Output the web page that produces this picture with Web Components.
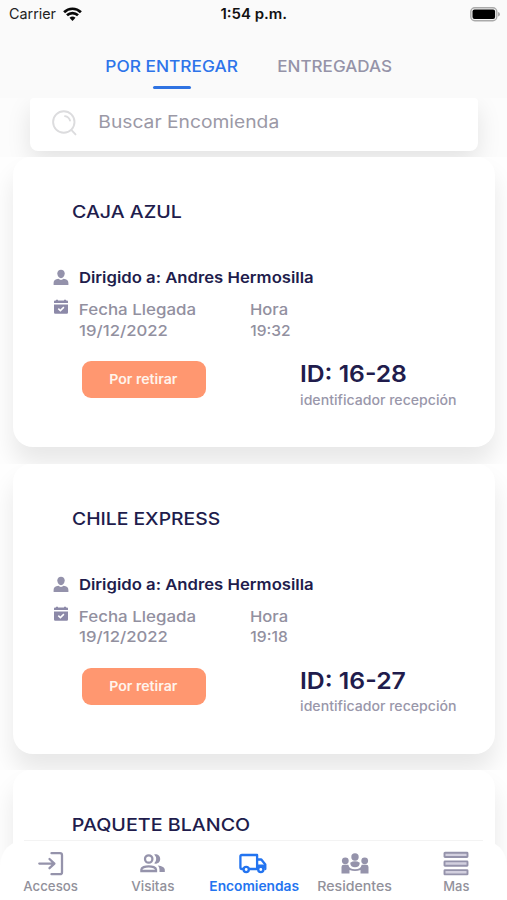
<!DOCTYPE html>
<html lang="es">
<head>
<meta charset="utf-8">
<title>Encomiendas</title>
<style>
html,body{margin:0;height:900px;overflow:hidden;background:#fefefe}
body{font-family:Inter,"Liberation Sans",sans-serif}
</style>
</head>
<body>
<parcel-app></parcel-app>
<script>
const ink = document.createElement('canvas').getContext('2d');
const define = (name, html, setup) => customElements.define(name, class extends HTMLElement {
  connectedCallback() {
    if (this.shadowRoot) return;
    this.attachShadow({mode: 'open'}).innerHTML = html;
    if (setup) setup.call(this, this.shadowRoot);
  }
});

/* One line of text: w = visible width, s = font size, h = line height, k = weight, x = optical shift */
customElements.define('text-line', class extends HTMLElement {
  connectedCallback() {
    if (this.shadowRoot) return;
    const a = n => +this.getAttribute(n);
    const root = this.attachShadow({mode: 'open'});
    const text = this.getAttribute('t');
    ink.font = `${a('k')} ${a('s')}px Inter`;
    const m = ink.measureText(text);
    const scale = a('w') / (m.actualBoundingBoxLeft + m.actualBoundingBoxRight);
    root.innerHTML = `<style>
      :host{display:block;width:${a('w')}px;height:${a('h')}px}
      span{display:inline-block;vertical-align:top;white-space:pre;font:${a('k')} ${a('s')}px/${a('h')}px Inter,"Liberation Sans",sans-serif;
        transform-origin:0 50%;transform:translateX(${m.actualBoundingBoxLeft * scale + a('x')}px) scaleX(${scale})}
    </style><span></span>`;
    root.querySelector('span').textContent = text;
  }
});

define('status-bar', `<style>
  :host{display:grid;grid-template-columns:1fr auto 1fr;align-items:center;height:28px;padding:0 7px 0 9px;color:#222}
  .l{display:flex;align-items:center;gap:6px}
  .r{justify-self:end;display:flex}
  .time{color:#111}
  svg{display:block}
</style>
<div class="l"><text-line t="Carrier" w="47.5" s="14.6" h="28" k="400"></text-line>
<svg width="19" height="15" viewBox="0 0 19 15" fill="none" stroke="#080808"><path d="M1.1 5.2a12 12 0 0 1 16.8 0M4 8.3a8 8 0 0 1 11 0" stroke-width="2.7"/><path d="M6.5 10.8a4.5 4.5 0 0 1 6 0L9.5 14z" fill="#080808" stroke="none"/></svg></div>
<text-line class="time" t="1:54 p.m." w="66" s="14.6" h="28" k="600" x="-1.6"></text-line>
<div class="r"><svg width="30" height="15" viewBox="0 0 30 15"><rect x=".8" y=".7" width="26" height="13" rx="4" fill="#f5f5f5" stroke="#aaa" stroke-width="1.4"/><rect x="2.5" y="2.4" width="22.6" height="9.6" rx="2" fill="#000"/><path d="M28 5q2 .5 2 2.2T28 9.5z" fill="#aaa"/></svg></div>`);

define('tab-header', `<style>
  :host{display:flex;gap:40.5px;height:70px;padding-left:106px;box-sizing:border-box}
  .on{color:#2d74ea}.off{color:#9593a8}
  .tab{display:flex;flex-direction:column;align-items:center;padding-top:24px;gap:5px}
  i{width:38px;height:2.6px;border-radius:2px;background:#2f73e2}
</style>
<div class="tab on"><text-line t="POR ENTREGAR" w="131.5" s="15.5" h="29" k="500" x=".4"></text-line><i></i></div>
<div class="tab off"><text-line t="ENTREGADAS" w="113.5" s="15.5" h="29" k="500" x=".4"></text-line></div>`);

define('search-box', `<style>
  :host{display:block;height:59px;overflow:hidden;background:#fcfcfc}
  .box{display:flex;align-items:center;gap:22px;box-sizing:border-box;height:53px;margin:0 29px 0 30px;padding:0 0 7px 22px;
    border-radius:4px 4px 8px 8px;background:#fff;color:#9b99a6;box-shadow:0 10px 24px rgba(0,0,0,.1)}
  svg{display:block;margin-top:3px}
  text-line{margin-top:1px}
</style>
<div class="box"><svg width="25" height="26" viewBox="0 0 25 26" fill="none" stroke="#dcdcde" stroke-width="1.9" stroke-linecap="round"><circle cx="11.8" cy="12" r="10.7"/><path d="M19.5 20.2l4 4.2M13 6.1a6 6 0 0 1 5 4.5"/></svg>
<text-line t="Buscar Encomienda" w="179" s="17.3" h="46" k="400" x=".4"></text-line></div>`);

define('parcel-card', `<style>
  :host{display:block;height:306.5px;overflow:hidden;background:#fefefe;flex:none}
  .card{box-sizing:border-box;height:290px;margin:0 12.5px 0 13px;padding:40px 0 0 39px;border-radius:18px 18px 20px 20px;background:#fff;
    box-shadow:0 17px 24px rgba(0,0,0,.09);color:#96939f}
  .title,.to,.id{color:#211c4c}
  .title{margin-left:20px}
  .row{display:flex;align-items:center;gap:11.5px;height:24px;margin-top:40px}
  .row svg,.info svg{display:block;width:16px;flex:none}
  .row svg{margin:-1px -1px 0 1px}
  .info{display:grid;grid-template-columns:16px 159.5px auto;column-gap:11.5px;margin-top:10px;color:#92909f}
  .info svg{margin-top:-1px;margin-left:.5px}
  .foot{display:flex;align-items:flex-start;margin:20px 0 0 30px}
  .btn{display:flex;align-items:center;justify-content:center;width:124px;height:37px;border-radius:9px;background:#ff9770;color:#fff4ec;margin-right:94.5px}
  .sub{color:#9997aa;margin-top:.5px}
</style>
<div class="card">
  <div class="title"></div>
  <div class="row"><svg height="17" viewBox="0 0 16 17" fill="#9492ab"><path d="M8 .7c2.2 0 3.7 1.6 3.7 3.9C11.700 7.300 10 9.300 8 9.300S4.300 7.300 4.300 4.600C4.300 2.300 5.800.7 8 .7z"/><path d="M.6 16v-1.900c0-2.700 1.700-3.800 4.800-4.300 1.500 1.500 3.700 1.500 5.200 0 3.100.5 4.800 1.600 4.800 4.300V16z"/></svg>
    <text-line class="to" t="Dirigido a: Andres Hermosilla" w="233" s="15" h="24" k="600"></text-line></div>
  <div class="info"><svg height="16" viewBox="0 0 16 16"><path d="M1 4V2.500Q1 1.500 2 1.500H3V.8h2v.7h6V.8h2v.7h1q1 0 1 1V4zM1 5.400h14V13.500q0 1.200-1.200 1.200H2.200Q1 14.700 1 13.500z" fill="#8c89a8"/><path d="M5.300 9.600l2.100 2 3.500-3.500" fill="none" stroke="#fff" stroke-width="1.500"/></svg>
    <div><text-line t="Fecha Llegada" w="115.500" s="15" h="20.700" k="500"></text-line><text-line t="19/12/2022" w="88.500" s="15" h="20.700" k="500" x="-.9"></text-line></div>
    <div class="hour"><text-line t="Hora" w="36.500" s="15" h="20.700" k="500"></text-line></div></div>
  <div class="foot"><div class="btn"><text-line t="Por retirar" w="68" s="13.200" h="39" k="600" x="-.8"></text-line></div>
    <div><div class="id"></div><text-line class="sub" t="identificador recepción" w="155.500" s="13" h="24" k="500" x="-.9"></text-line></div></div>
</div>`, function (root) {
  const put = (sel, attrs) => { const e = document.createElement('text-line'); for (const n in attrs) e.setAttribute(n, attrs[n]); root.querySelector(sel).append(e); };
  const d = this.dataset;
  put('.title', {t: d.name, w: d.nameW, s: 17.2, h: 29, k: 500, x: d.nameX || 0});
  /* a card without a code shows its title only */
  if (!d.code) { root.querySelectorAll('.row,.info,.foot').forEach(e => e.remove()); return; }
  put('.hour', {t: d.hour, w: d.hourW, s: 15, h: 20.7, k: 500, x: -.7});
  put('.id', {t: d.code, w: d.codeW, s: 23.2, h: 26, k: 600});
});

define('nav-item', `<style>
  :host{display:flex;flex-direction:column;align-items:center;color:#92919b}
  :host([on]){color:#2374f0}
  .i{display:flex;align-items:center;justify-content:center;height:25px;margin-top:11px;color:#9593ab}
  :host([on]) .i{color:#2374f0}
</style><div class="i"><slot></slot></div>`, function (root) {
  const e = document.createElement('text-line'), d = this.dataset;
  for (const [n, v] of Object.entries({t: d.label, w: d.w, s: 13.2, h: 20, k: this.hasAttribute('on') ? 600 : 500, x: .3})) e.setAttribute(n, v);
  root.append(e);
});

define('nav-bar', `<style>
  :host{display:grid;grid-template-columns:repeat(5,1fr);box-sizing:border-box;height:60px;border-radius:25px 25px 0 0;
    background:linear-gradient(#f3f3f3,#f3f3f3) 50% 0/calc(100% - 48px) 1px no-repeat,#fff}
  svg{display:block}
</style>
<nav-item data-label="Accesos" data-w="54.5"><svg width="26" height="25" viewBox="0 0 26 25" fill="none" stroke="currentColor" stroke-width="2.3" stroke-linecap="round" stroke-linejoin="round"><path d="M13.500 2.200H22q2 0 2 2v17q0 2-2 2h-8.500M1.300 12.600h15M11.500 8l4.900 4.600-4.900 4.600"/></svg></nav-item>
<nav-item data-label="Visitas" data-w="43"><svg width="25" height="19" viewBox="0 0 25 19"><g fill="none" stroke="currentColor" stroke-width="2.300"><circle cx="8.700" cy="5" r="3.700"/><path d="M1.400 17v-1.500c0-2 3.700-3.200 7.300-3.200s7.300 1.200 7.300 3.200V17z"/></g><path d="M14.200.4c3.300-.7 6 1.500 6 4.600s-2.700 5.300-6 4.600q2-2 2-4.600T14.200.4zM18 11.400c4 .5 6.800 2 6.800 4.400V18h-5.300v-2.300q0-2.600-1.500-4.300z" fill="currentColor"/></svg></nav-item>
<nav-item on data-label="Encomiendas" data-w="89.5"><svg width="28" height="21" viewBox="0 0 28 21" fill="none" stroke="currentColor" stroke-width="2.300" stroke-linejoin="round"><path d="M4.500 16H2.900q-1.500 0-1.500-1.500v-11Q1.400 2 2.900 2h15.200v14H9.500M18.100 6.500h4.200l4 5V16h-1"/><path d="M20 8.500h1.600l2.500 3.200H20z" stroke="none" fill="#fff"/><path d="M19 11.500h7V15h-7z" fill="currentColor" stroke="none"/><circle cx="7.200" cy="16.500" r="2.600" fill="#fff"/><circle cx="21.800" cy="16.500" r="2.600" fill="#fff"/></svg></nav-item>
<nav-item data-label="Residentes" data-w="73.5"><svg width="28" height="21" viewBox="0 0 28 21" fill="currentColor"><circle cx="14" cy="4" r="3.700"/><circle cx="4.300" cy="7.800" r="3.400"/><circle cx="23.700" cy="7.800" r="3.400"/><path d="M9.200 9.700q4.800-2.900 9.600 0-.3 4.600-4.800 4.600t-4.800-4.600zM.5 20.500V14q0-2.300 2.300-2.300h4.500q1 4.600 6.700 4.600t6.700-4.600h4.500q2.300 0 2.300 2.300v6.500h-8v-3.600q-5.500 2.200-11 0v3.600z"/></svg></nav-item>
<nav-item data-label="Mas" data-w="25"><svg width="26" height="25" viewBox="0 0 26 25" fill="#d3d0df" stroke="currentColor" stroke-width="1.900"><rect x="1.500" y="1.700" width="23" height="4.300" rx=".5"/><rect x="1.500" y="10.400" width="23" height="4.300" rx=".5"/><rect x="1.500" y="19.100" width="23" height="4.300" rx=".5"/></svg></nav-item>`);

define('parcel-app', `<style>
  :host{display:flex;flex-direction:column;width:507px;height:900px;overflow:hidden}
  header{background:#fafafa;height:98px;flex:none}
  main{height:742px;flex:none}
  nav-bar{position:relative;flex:none}
</style>
<header><status-bar></status-bar><tab-header></tab-header></header>
<main><search-box></search-box>
<parcel-card data-name="CAJA AZUL" data-name-w="109" data-hour="19:32" data-hour-w="40" data-code="ID: 16-28" data-code-w="105"></parcel-card>
<parcel-card data-name="CHILE EXPRESS" data-name-w="148" data-hour="19:18" data-hour-w="37" data-code="ID: 16-27" data-code-w="104.5"></parcel-card>
<parcel-card data-name="PAQUETE BLANCO" data-name-w="177" data-name-x="1"></parcel-card>
</main>
<nav-bar></nav-bar>`);
</script>
</body>
</html>
